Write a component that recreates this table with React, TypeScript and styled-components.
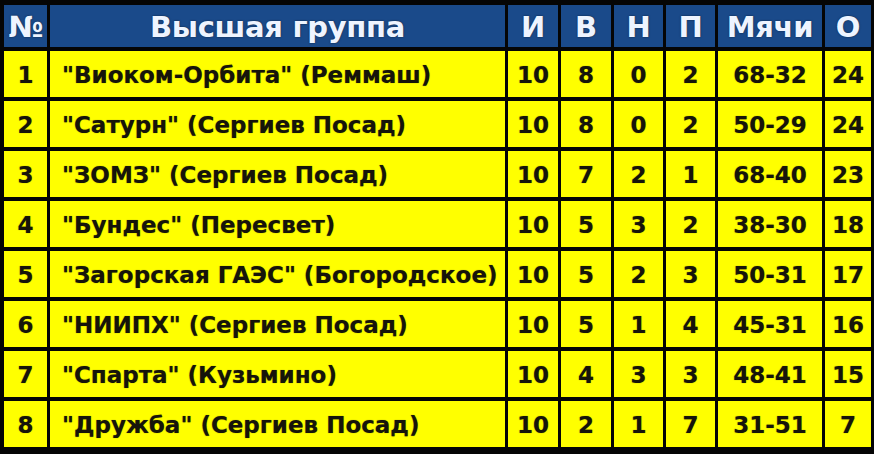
import styled, { createGlobalStyle } from "styled-components";

const GlobalStyle = createGlobalStyle`
  html, body {
    margin: 0;
    padding: 0;
    background: #000;
  }
`;

type Team = {
  name: string;
  games: number;
  wins: number;
  draws: number;
  losses: number;
  goals: string;
  points: number;
};

const teams: Team[] = [
  { name: "\"Виоком-Орбита\" (Реммаш)", games: 10, wins: 8, draws: 0, losses: 2, goals: "68-32", points: 24 },
  { name: "\"Сатурн\" (Сергиев Посад)", games: 10, wins: 8, draws: 0, losses: 2, goals: "50-29", points: 24 },
  { name: "\"ЗОМЗ\" (Сергиев Посад)", games: 10, wins: 7, draws: 2, losses: 1, goals: "68-40", points: 23 },
  { name: "\"Бундес\" (Пересвет)", games: 10, wins: 5, draws: 3, losses: 2, goals: "38-30", points: 18 },
  { name: "\"Загорская ГАЭС\" (Богородское)", games: 10, wins: 5, draws: 2, losses: 3, goals: "50-31", points: 17 },
  { name: "\"НИИПХ\" (Сергиев Посад)", games: 10, wins: 5, draws: 1, losses: 4, goals: "45-31", points: 16 },
  { name: "\"Спарта\" (Кузьмино)", games: 10, wins: 4, draws: 3, losses: 3, goals: "48-41", points: 15 },
  { name: "\"Дружба\" (Сергиев Посад)", games: 10, wins: 2, draws: 1, losses: 7, goals: "31-51", points: 7 },
];

export default function App() {
  return (
    <>
      <GlobalStyle />
      <Table>
        <HeadCell>№</HeadCell>
        <HeadCell>Высшая группа</HeadCell>
        <HeadCell>И</HeadCell>
        <HeadCell>В</HeadCell>
        <HeadCell>Н</HeadCell>
        <HeadCell>П</HeadCell>
        <HeadCell>Мячи</HeadCell>
        <HeadCell>О</HeadCell>
        {teams.map((t, i) => (
          <Row key={t.name}>
            <Cell>{i + 1}</Cell>
            <Cell $left>{t.name}</Cell>
            <Cell>{t.games}</Cell>
            <Cell>{t.wins}</Cell>
            <Cell>{t.draws}</Cell>
            <Cell>{t.losses}</Cell>
            <Cell>{t.goals}</Cell>
            <Cell>{t.points}</Cell>
          </Row>
        ))}
      </Table>
    </>
  );
}

const Table = styled.div`
  width: 874px;
  height: 454px;
  box-sizing: border-box;
  padding: 5px 3px 5px 4px;
  background: #050505;
  display: grid;
  grid-template-columns: 43px 455px 50px 50px 49px 49px 104px 46px;
  grid-template-rows: 42px repeat(8, 46px);
  column-gap: 3px;
  row-gap: 4px;
  font-family: "DejaVu Sans", Tahoma, sans-serif;
  font-weight: bold;
`;

const Row = styled.div`
  display: contents;
`;

const HeadCell = styled.div`
  background: #1a4a8a;
  color: #eef4ff;
  font-size: 29px;
  letter-spacing: -0.3px;
  display: flex;
  align-items: center;
  justify-content: center;
  padding-top: 2px;
  text-shadow: 0 0 2px rgba(0, 0, 0, 0.6);
  white-space: nowrap;
  overflow: hidden;
`;

const Cell = styled.div<{ $left?: boolean }>`
  background: #ffff00;
  color: #16140a;
  font-size: 23px;
  display: flex;
  align-items: center;
  justify-content: ${(p) => (p.$left ? "flex-start" : "center")};
  padding-left: ${(p) => (p.$left ? "12px" : "0")};
  padding-top: 2px;
  white-space: nowrap;
  overflow: hidden;
  text-shadow: 0 0 1px rgba(40, 40, 0, 0.6);
`;
